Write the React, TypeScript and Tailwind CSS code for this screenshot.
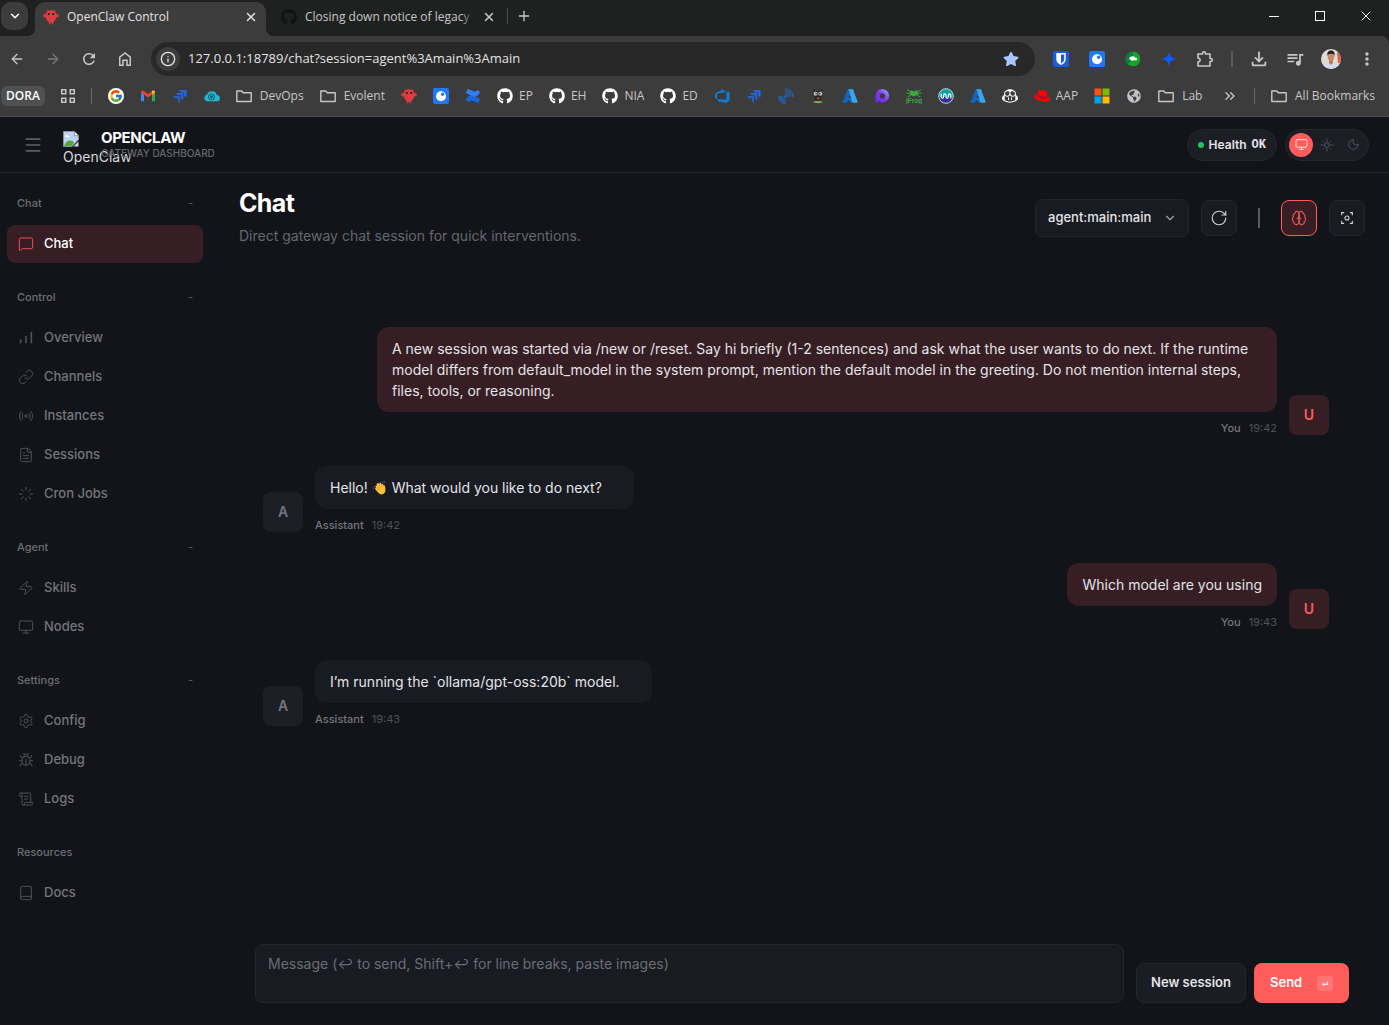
import { useId, useState, type ComponentType, type ReactNode } from "react";
import {
  ArrowLeft,
  ArrowRight,
  Book,
  Bug,
  ChevronDown,
  ChevronsRight,
  FileText,
  Info,
  Link,
  Loader,
  Menu,
  MessageSquare,
  Monitor,
  Moon,
  Plus,
  Radio,
  ScrollText,
  Settings,
  X,
  Zap,
} from "lucide-react";
import { FcGoogle } from "react-icons/fc";
import { FaGithub, FaGlobeAmericas, FaRedhat, FaStar } from "react-icons/fa";
import { GoCopilot } from "react-icons/go";
import { MdMoreVert, MdOutlineFileDownload, MdQueueMusic, MdRefresh } from "react-icons/md";

type IconProps = { className?: string };
type IconType = ComponentType<IconProps>;

// --- favicons and logos ---

function ClawLogo() {
  return (
    <svg viewBox="0 0 16 16" className="size-4" aria-hidden="true">
      <path d="M5 3 4 .8M11 3l1-2.2" stroke="#c62f33" strokeWidth="1" />
      <path
        d="M8 1.200c3.600 0 5.300 2 5.500 4.300 1.400-.4 2.300.2 2.300 1.200 0 1.200-1.200 1.900-2.500 1.700-.6 2.100-1.700 3.600-3.100 4.600v2.200H8.700v-1.400H7.300v1.400H5.800V13C4.400 12 3.300 10.500 2.700 8.400 1.400 8.600.2 7.900.2 6.700c0-1 .9-1.600 2.300-1.200C2.700 3.200 4.400 1.200 8 1.200Z"
        fill="#dc3c40"
      />
      <circle cx="5.800" cy="5" r="1.100" fill="#2b1014" />
      <circle cx="10.200" cy="5" r="1.100" fill="#2b1014" />
    </svg>
  );
}

function GoogleLogo() {
  return (
    <span className="flex size-4 items-center justify-center rounded-full bg-white">
      <FcGoogle className="size-[14px]" />
    </span>
  );
}

function GmailLogo() {
  return (
    <svg viewBox="0 0 16 16" className="size-4" aria-hidden="true">
      <path d="M1 4v8.500c0 .5.400.8.800.8H4V6.500Z" fill="#4285f4" />
      <path d="M15 4v8.500c0 .5-.4.8-.8.8H12V6.500Z" fill="#34a853" />
      <path d="M1 4.200C1 2.600 2.700 2 3.900 2.900L8 6l4.100-3.100C13.300 2 15 2.600 15 4.200L8 9.600Z" fill="#ea4335" />
      <path d="M12 3v3.700l3-2.300C15.200 2.700 13.500 2 12 3Z" fill="#fbbc04" />
    </svg>
  );
}

function JiraLogo() {
  return (
    <svg viewBox="0 0 16 16" className="size-4" fill="#2068e0" aria-hidden="true">
      <path d="M7 2h7.500v7.500L12 7.800V4.500H8.700Z" />
      <path d="M4 5h7.300v7.300L9 10.600V7.300H5.700Z" opacity=".9" />
      <path d="M1 8h7.100v7L5.900 13.400v-3.200H2.700Z" opacity=".8" />
    </svg>
  );
}

function CloudLogo() {
  return (
    <svg viewBox="0 0 16 16" className="size-4" aria-hidden="true">
      <path d="M3.500 13.300a3.300 3.300 0 0 1-.6-6.500 5.300 5.300 0 0 1 10.100.5 3 3 0 0 1-.3 6Z" fill="#24b6cf" />
      <circle cx="7.500" cy="8.800" r="3.400" fill="#17627a" />
      <circle cx="7.500" cy="8.800" r="2" fill="none" stroke="#35c2d8" strokeWidth=".8" />
    </svg>
  );
}

function OrbLogo() {
  return (
    <svg viewBox="0 0 16 16" className="size-4" aria-hidden="true">
      <rect width="16" height="16" rx="2" fill="#1e78f7" />
      <circle cx="8" cy="8.200" r="5" fill="#fff" />
      <circle cx="9.600" cy="6.300" r="1.700" fill="#1e78f7" />
    </svg>
  );
}

function ConfluenceLogo() {
  return (
    <svg viewBox="0 0 16 16" className="size-4" aria-hidden="true">
      <path d="m.6 12.300 1.600-2.600c2-3 4.500-2.800 7.600-1.300l5.400 2.500-2 4.400-5-2.300c-2.200-1-3-.9-4.200 1.100Z" fill="#1868db" />
      <path d="m15.400 3.700-1.600 2.600c-2 3-4.500 2.800-7.600 1.300L.8 5.100l2-4.400 5 2.300c2.200 1 3 .9 4.200-1.100Z" fill="#2f7ef5" />
    </svg>
  );
}

function GithubLogo() {
  return <FaGithub className="size-4 text-white" />;
}

function AzureDevopsLogo() {
  return (
    <svg viewBox="0 0 16 16" className="size-4" fill="#0f7cd6" aria-hidden="true">
      <path d="M15.500 3.600v8.700l-3.600 3-5.600-2v2L3.100 11l9.200.7V3.900Zm-3.100.3L7.200.8v2L2.500 4.200 1 6v4.200l2.100.9V5.600Z" />
    </svg>
  );
}

function WavesLogo() {
  return (
    <svg viewBox="0 0 16 16" className="size-4" fill="none" stroke="#1f66b8" strokeWidth="1.200" aria-hidden="true">
      <circle cx="7.500" cy="8.500" r="1" fill="#1f66b8" />
      <path d="M7 5.500a3 3 0 0 1 3.500 3.500M7 3.200A5.300 5.300 0 0 1 12.800 9M7 1a7.500 7.500 0 0 1 8 8" />
      <path d="M4.500 8a3 3 0 0 0 3.500 3.500M2.500 7.800A5.300 5.300 0 0 0 8 13.600M.7 7.500A7.500 7.500 0 0 0 8 15.500" />
    </svg>
  );
}

function AntLogo() {
  return (
    <svg viewBox="0 0 16 16" className="size-4" aria-hidden="true">
      <path d="M5 3.500 3.500 1M11 3.500 12.500 1" stroke="#222" strokeWidth="1" />
      <rect x="4.500" y="3" width="7" height="9.500" rx="3" fill="#26221f" />
      <circle cx="5.700" cy="5.700" r="2" fill="#c9c2ba" />
      <circle cx="10.300" cy="5.700" r="2" fill="#c9c2ba" />
      <circle cx="6.200" cy="5.800" r=".8" fill="#222" />
      <circle cx="9.800" cy="5.800" r=".8" fill="#222" />
      <path d="M7 9.300h2.500v2H7Z" fill="#b84a43" />
      <path d="M3 14c2-1.500 8-1.500 10 0-2 1.600-8 1.600-10 0Z" fill="#78a957" />
    </svg>
  );
}

function AzureLogo() {
  return (
    <svg viewBox="0 0 16 16" className="size-4" aria-hidden="true">
      <path d="M5.700 1.200h4.200L5.300 14.800H1.200c-.5 0-.8-.5-.7-.9Z" fill="#1266b5" />
      <path d="M5 10h7l1.500 4.800H9.700Z" fill="#0a78d4" />
      <path d="M6.400 1.200h4c.4 0 .7.200.8.600l4.500 12.100c.1.500-.2.900-.7.900h-4.300Z" fill="#38a7ea" />
    </svg>
  );
}

function LoopLogo() {
  const id = useId();
  return (
    <svg viewBox="0 0 16 16" className="size-4" aria-hidden="true">
      <defs>
        <linearGradient id={id} x1="0" y1="1" x2="1" y2="0">
          <stop offset="0" stopColor="#5b2ff0" />
          <stop offset=".5" stopColor="#8a35ee" />
          <stop offset="1" stopColor="#8fb6f5" />
        </linearGradient>
      </defs>
      <path
        d="M8.300 1a6.800 6.800 0 0 1 0 13.600H6.800c-.5 0-.8-.3-.8-.8v-1.600C4.500 14.400 1.500 15 1.500 13V7.800A6.800 6.800 0 0 1 8.300 1Zm0 4.300a2.600 2.600 0 1 0 0 5.200 2.600 2.600 0 0 0 0-5.200Z"
        fill={`url(#${id})`}
        fillRule="evenodd"
      />
    </svg>
  );
}

function JfrogLogo() {
  return (
    <svg viewBox="0 0 16 16" className="size-4" aria-hidden="true">
      <path
        d="M1 1.500 4.500 4M15 1.500 11.500 4M.5 5l4 .5M15.500 5l-4 .5M1.500 9 5 7M14.500 9 11 7"
        stroke="#3da744"
        strokeWidth="1"
      />
      <path d="M4 3.500 5.500 2.200 8 3.400l2.500-1.200L12 3.500v3L8 8.500l-4-2Z" fill="#3da744" />
      <text x="8" y="15" textAnchor="middle" fontSize="6.500" fontWeight="700" fill="#3da744" fontFamily="Liberation Sans">
        jFrog
      </text>
    </svg>
  );
}

function WaveDiscLogo() {
  return (
    <svg viewBox="0 0 16 16" className="size-4" aria-hidden="true">
      <circle cx="8" cy="8" r="7.500" fill="#0e9fa4" />
      <path d="M.6 9h14.800A7.500 7.500 0 0 1 .6 9Z" fill="#3b2d91" />
      <circle cx="8" cy="8" r="7.300" fill="none" stroke="#dfe9ea" strokeWidth=".8" />
      <path
        d="M3.200 5.500v3c0 2.300 2.400 2.300 2.400 0v-1c0-2.300 2.400-2.300 2.400 0v1c0 2.300 2.400 2.300 2.400 0v-1c0-2.300 2.400-2.300 2.400 0v3"
        fill="none"
        stroke="#fff"
        strokeWidth="1.200"
      />
    </svg>
  );
}

function CopilotLogo() {
  return <GoCopilot className="size-4 text-white" />;
}

function RedhatLogo() {
  return <FaRedhat className="size-4 text-[#f00]" />;
}

function MicrosoftLogo() {
  return (
    <svg viewBox="0 0 16 16" className="size-4" aria-hidden="true">
      <path d="M.5.500h7v7h-7Z" fill="#f65314" />
      <path d="M8.500.500h7v7h-7Z" fill="#7cbb00" />
      <path d="M.5 8.500h7v7h-7Z" fill="#00a1f1" />
      <path d="M8.500 8.500h7v7h-7Z" fill="#ffbb00" />
    </svg>
  );
}

function GlobeLogo() {
  return (
    <span className="flex size-4 items-center justify-center">
      <FaGlobeAmericas className="size-[14px] text-[#bfc3c8]" />
    </span>
  );
}

function FolderLogo() {
  return (
    <svg viewBox="0 0 16 16" className="mr-[2px] size-4" fill="none" stroke="#c7c7c7" strokeWidth="1.400" strokeLinejoin="round" aria-hidden="true">
      <path d="M.8 3h4.900l1.500 1.700h8v8.800H.8Z" />
    </svg>
  );
}

function AppsIcon() {
  return (
    <svg viewBox="0 0 14 14" className="size-[14px]" fill="none" stroke="#c7c7c7" strokeWidth="1.500" aria-hidden="true">
      <path d="M.75.75h4v4h-4ZM9.250.75h4v4h-4ZM.75 9.250h4v4h-4ZM9.250 9.250h4v4h-4Z" />
    </svg>
  );
}

function HomeIcon() {
  return (
    <svg viewBox="0 0 16 16" className="size-4" fill="none" stroke="currentColor" strokeWidth="1.500" aria-hidden="true">
      <path d="M2.750 14.250V6.200L8 2l5.250 4.200v8.050H10v-5H6v5Z" />
    </svg>
  );
}

function PuzzleIcon() {
  return (
    <svg viewBox="0 0 18 18" className="size-[18px]" fill="none" stroke="currentColor" strokeWidth="1.600" strokeLinejoin="round" aria-hidden="true">
      <path d="M2 4h4.500V3.200a1.500 1.500 0 0 1 3 0V4H14v4.500h.8a1.500 1.500 0 0 1 0 3H14V16H2v-4c2.800-.4 2.800-3.600 0-4Z" />
    </svg>
  );
}

function BitwardenLogo() {
  return (
    <svg viewBox="0 0 16 16" className="size-4" aria-hidden="true">
      <rect width="16" height="16" rx="2" fill="#175ddc" />
      <path d="M3.300 2h9.400v6.200c0 2.700-2 4.600-4.700 5.900-2.700-1.300-4.700-3.200-4.700-5.900Z" fill="#fff" />
      <path d="M8 3.600h3.200v4.600c0 1.900-1.200 3.100-3.200 4.200Z" fill="#175ddc" />
    </svg>
  );
}

function LeafLogo() {
  return (
    <svg viewBox="0 0 16 16" className="size-4" aria-hidden="true">
      <circle cx="8" cy="8" r="7.300" fill="#13a526" />
      <path d="M8 .7a7.300 7.300 0 0 0-5 12.600L8 8Z" fill="#0c7f3c" />
      <path d="M4 8c.6-2.800 4.500-3.600 6-1.400 1.900-.1 2.600 1.200 2 2.600H8l-1 1C6.500 9 5.500 9 4 8Z" fill="#fff" />
    </svg>
  );
}

function SparkLogo() {
  return (
    <svg viewBox="0 0 16 16" className="size-4" aria-hidden="true">
      <path d="M8 .3c.6 4.800 2.500 6.900 7.700 7.700-5.200.8-7.100 2.900-7.700 7.700C7.400 10.900 5.500 8.800.3 8 5.500 7.200 7.400 5.100 8 .3Z" fill="#0b5cff" />
    </svg>
  );
}

function ProfilePhoto() {
  const id = useId();
  return (
    <svg viewBox="0 0 20 20" className="size-5" aria-hidden="true">
      <clipPath id={id}>
        <circle cx="10" cy="10" r="10" />
      </clipPath>
      <g clipPath={`url(#${id})`}>
        <path d="M0 0h20v20H0Z" fill="#dfdcd8" />
        <path d="M16 2h4v12h-3Z" fill="#e0603c" />
        <path d="M1 20c.5-5 4-7 9-7s8.500 2 9 7Z" fill="#d3dbe8" />
        <path d="M8 10h4v4l-2 2-2-2Z" fill="#b67a5d" />
        <ellipse cx="10" cy="7.500" rx="3.300" ry="4.300" fill="#c68a6b" />
        <path d="M6.300 7C6 3 7.500 1.500 10 1.500S14 3 13.700 7c-.5-1.500-1-2.300-3.700-2.300S6.800 5.500 6.300 7Z" fill="#2a2120" />
      </g>
    </svg>
  );
}

function BarsIcon({ className }: IconProps) {
  return (
    <svg viewBox="0 0 24 24" className={className} fill="none" stroke="currentColor" aria-hidden="true">
      <path d="M20 20V3M12 20V9M4 20v-6" strokeWidth="2.500" />
    </svg>
  );
}

function BrainIcon() {
  return (
    <svg
      viewBox="0 0 24 24"
      className="size-4"
      fill="none"
      stroke="currentColor"
      strokeWidth="1.700"
      strokeLinecap="round"
      strokeLinejoin="round"
      aria-hidden="true"
    >
      <path d="M12 5a3 3 0 1 0-5.997.125 4 4 0 0 0-2.526 5.770 4 4 0 0 0 .556 6.588A4 4 0 1 0 12 18Z" />
      <path d="M12 5a3 3 0 1 1 5.997.125 4 4 0 0 1 2.526 5.770 4 4 0 0 1-.556 6.588A4 4 0 1 1 12 18Z" />
      <path d="M15 13a4.500 4.500 0 0 1-3-4 4.500 4.500 0 0 1-3 4" />
    </svg>
  );
}

function FocusIcon() {
  return (
    <svg
      viewBox="0 0 24 24"
      className="size-4"
      fill="none"
      stroke="currentColor"
      strokeWidth="1.700"
      strokeLinecap="round"
      aria-hidden="true"
    >
      <path d="M4 7V4h3M17 4h3v3M20 17v3h-3M7 20H4v-3" />
      <circle cx="12" cy="12" r="3" />
    </svg>
  );
}

function RefreshIcon() {
  return (
    <svg
      viewBox="0 0 24 24"
      className="size-[18px]"
      fill="none"
      stroke="currentColor"
      strokeWidth="1.500"
      strokeLinecap="round"
      strokeLinejoin="round"
      aria-hidden="true"
    >
      <path d="M21 12a9 9 0 1 1-9-9c2.520 0 4.930 1 6.740 2.740L21 8" />
      <path d="M21 3v5h-5" />
    </svg>
  );
}

function SunIcon() {
  return (
    <svg viewBox="0 0 24 24" className="size-[14px]" fill="none" stroke="currentColor" strokeWidth="1.500" aria-hidden="true">
      <circle cx="12" cy="12" r="4" />
      <path d="M12 1v5M12 18v5M1 12h5M18 12h5M4.900 4.900l1.400 1.400M17.700 17.700l1.400 1.400M4.900 19.100l1.400-1.400M17.700 6.300l1.400-1.400" />
    </svg>
  );
}

function WavingHand() {
  return (
    <svg viewBox="0 0 16 16" className="mx-px inline size-[14px] align-[-2px]" role="img" aria-label="waving hand">
      <path
        d="M5 2.500c.8-.6 1.400-.2 1.800.4l.6.8V2.600c.2-1 1.500-1 1.800 0l.5 1.300c.3-1 1.700-1 1.900.1l.3 1.300c.5-.8 1.700-.5 1.800.5.4 3 1.300 5.600-.6 8-1.800 2-5 2-6.800 0L2.500 9.500c-.5-.8.3-1.700 1.200-1.300L2.800 6.800c-.4-.9.500-1.700 1.300-1.200L4 4.500C4 3.500 4.400 2.900 5 2.500Z"
        fill="#fcbf3a"
      />
      <path d="m5 5.500 3 3.500M4 8l3 2.800M7.500 4l2 3.600" stroke="#e28a1d" strokeWidth=".7" />
      <path d="M1 6.500c-.5 1-.3 2 0 2.800M10 1c1 .1 1.700.5 2.300 1.300M12 .2c1 .3 1.700 1 2 2" fill="none" stroke="#2d6ea3" strokeWidth="1" />
    </svg>
  );
}

function BrokenImage() {
  return (
    <svg viewBox="0 0 16 16" className="size-4 shrink-0" aria-hidden="true">
      <path d="M.5.500h10.800l4.200 4.200v4L9 15.500H.5Z" fill="#bcd3f5" stroke="#8b8f96" />
      <path d="M11.300.5v4.200h4.200" fill="#fff" stroke="#8b8f96" />
      <path d="M2.500 5.500c.2-1.500 2-1.800 2.700-.8 1-.3 1.800.4 1.700 1.300H2.500Z" fill="#fff" />
      <path d="M1 15c1-3.500 3.500-5.500 6-5.500 1.800 0 3.200.8 4 2L9 15Z" fill="#54a83a" />
      <path d="M10.500 15.500l5-5v5Z" fill="#d6dade" />
    </svg>
  );
}

// --- browser window ---

const BOOKMARKS: { icon: ComponentType; label?: string; name?: string }[] = [
  { icon: GoogleLogo, name: "Google" },
  { icon: GmailLogo, name: "Gmail" },
  { icon: JiraLogo, name: "Jira" },
  { icon: CloudLogo, name: "Cloud" },
  { icon: FolderLogo, label: "DevOps" },
  { icon: FolderLogo, label: "Evolent" },
  { icon: ClawLogo, name: "OpenClaw" },
  { icon: OrbLogo, name: "Orb" },
  { icon: ConfluenceLogo, name: "Confluence" },
  { icon: GithubLogo, label: "EP" },
  { icon: GithubLogo, label: "EH" },
  { icon: GithubLogo, label: "NIA" },
  { icon: GithubLogo, label: "ED" },
  { icon: AzureDevopsLogo, name: "Azure DevOps" },
  { icon: JiraLogo, name: "Jira board" },
  { icon: WavesLogo, name: "Signals" },
  { icon: AntLogo, name: "Ant" },
  { icon: AzureLogo, name: "Azure" },
  { icon: LoopLogo, name: "Loop" },
  { icon: JfrogLogo, name: "JFrog" },
  { icon: WaveDiscLogo, name: "Wave" },
  { icon: AzureLogo, name: "Azure portal" },
  { icon: CopilotLogo, name: "Copilot" },
  { icon: RedhatLogo, label: "AAP" },
  { icon: MicrosoftLogo, name: "Microsoft" },
  { icon: GlobeLogo, name: "Site" },
  { icon: FolderLogo, label: "Lab" },
];

function ChromeButton({ label, children }: { label: string; children: ReactNode }) {
  return (
    <button type="button" aria-label={label} className="flex size-8 shrink-0 items-center justify-center text-[#c7c7c7]">
      {children}
    </button>
  );
}

function TabStrip() {
  return (
    <div className="flex h-9 items-start pl-px">
      <button
        type="button"
        aria-label="Search tabs"
        className="mt-[2px] flex h-7 w-[27px] items-center justify-center rounded-[10px] bg-[#3c3c3c] text-white"
      >
        <ChevronDown className="size-[14px]" strokeWidth={2.5} />
      </button>
      <div className="relative ml-[7px] mt-[2px] flex h-[34px] w-[231px] items-center rounded-t-[10px] bg-[#3c3c3c] px-2 pb-1">
        {/* the tab flares out where it meets the toolbar */}
        <span className="absolute -left-2 bottom-0 size-2 bg-[radial-gradient(circle_at_0_0,transparent_8px,#3c3c3c_8px)]" />
        <span className="absolute -right-2 bottom-0 size-2 bg-[radial-gradient(circle_at_100%_0,transparent_8px,#3c3c3c_8px)]" />
        <ClawLogo />
        <span className="ml-2 flex-1 truncate text-xs text-[#e3e3e3]">OpenClaw Control</span>
        <button type="button" aria-label="Close tab" className="text-[#e3e3e3]">
          <X className="size-[14px]" strokeWidth={2.5} />
        </button>
      </div>
      <div className="mt-[2px] flex h-[34px] w-[230px] items-center pb-1 pl-[15px]">
        <FaGithub className="size-4 text-[#111212]" />
        <span className="relative ml-2 w-[168px] overflow-hidden whitespace-nowrap text-xs text-[#c7c7c7]">
          Closing down notice of legacy C
          <span className="absolute inset-y-0 right-0 w-3 bg-gradient-to-r from-transparent to-[#1f2120]" />
        </span>
        <button type="button" aria-label="Close tab" className="ml-[9px] text-[#c7c7c7]">
          <X className="size-[14px]" strokeWidth={2.5} />
        </button>
      </div>
      <div className="ml-[11px] mt-2 h-4 w-px bg-[#4a4c4b]" />
      <button type="button" aria-label="New tab" className="ml-2 mt-2 text-[#c7c7c7]">
        <Plus className="size-4" />
      </button>
      <div className="ml-auto flex h-8 text-white">
        <button type="button" aria-label="Minimize" className="flex w-[46px] items-center justify-center">
          <span className="h-px w-[10px] bg-white" />
        </button>
        <button type="button" aria-label="Maximize" className="flex w-[46px] items-center justify-center">
          <span className="size-[10px] border border-white" />
        </button>
        <button type="button" aria-label="Close window" className="flex w-[46px] items-center justify-center">
          <X className="size-4" strokeWidth={1.5} />
        </button>
      </div>
    </div>
  );
}

function Toolbar() {
  return (
    <div className="flex h-[46px] items-center gap-1 px-px">
      <ChromeButton label="Back">
        <ArrowLeft className="size-4" />
      </ChromeButton>
      <ChromeButton label="Forward">
        <ArrowRight className="size-4 text-[#7a7a7a]" />
      </ChromeButton>
      <ChromeButton label="Reload">
        <MdRefresh className="size-[18px]" />
      </ChromeButton>
      <ChromeButton label="Home">
        <HomeIcon />
      </ChromeButton>
      <div className="mx-[6px] flex h-[34px] flex-1 items-center rounded-full bg-[#282828] px-[5px]">
        <span className="flex size-6 shrink-0 items-center justify-center rounded-full bg-[#3c3c3c]">
          <Info className="size-4 text-[#e3e3e3]" />
        </span>
        <input
          aria-label="Address"
          className="min-w-0 flex-1 bg-transparent px-2 text-[13px] text-[#e3e3e3] outline-none"
          defaultValue="127.0.0.1:18789/chat?session=agent%3Amain%3Amain"
        />
        <FaStar className="mr-[11px] size-4 text-[#a8c7fa]" />
      </div>
      <ChromeButton label="Bitwarden">
        <BitwardenLogo />
      </ChromeButton>
      <ChromeButton label="Orb">
        <OrbLogo />
      </ChromeButton>
      <ChromeButton label="Leaf">
        <LeafLogo />
      </ChromeButton>
      <ChromeButton label="Spark">
        <SparkLogo />
      </ChromeButton>
      <ChromeButton label="Extensions">
        <PuzzleIcon />
      </ChromeButton>
      <span className="mx-[6px] h-4 w-[2px] bg-[#5a5a5a]" />
      <ChromeButton label="Downloads">
        <MdOutlineFileDownload className="size-[22px]" />
      </ChromeButton>
      <ChromeButton label="Media">
        <MdQueueMusic className="size-5" />
      </ChromeButton>
      <ChromeButton label="Profile">
        <ProfilePhoto />
      </ChromeButton>
      <ChromeButton label="More">
        <MdMoreVert className="size-5" />
      </ChromeButton>
      <span className="w-px" />
    </div>
  );
}

function BookmarksBar() {
  return (
    <div className="mt-1 flex h-[31px] items-start gap-4 overflow-hidden whitespace-nowrap border-b border-[#4b4b4b] pl-px pr-[14px] text-xs text-[#c7c7c7]">
      <button type="button" className="h-5 rounded-md bg-[#4e5052] px-[5px] font-semibold text-white">
        DORA
      </button>
      <button type="button" aria-label="Apps" className="flex h-5 items-center">
        <AppsIcon />
      </button>
      <span className="mt-[2px] h-4 w-px bg-[#6a6a6a]" />
      {BOOKMARKS.map(({ icon: Icon, label, name }) => (
        <a key={label ?? name} href="#" aria-label={label ?? name} className="flex h-5 items-center gap-[6px]">
          <Icon />
          {label}
        </a>
      ))}
      <button type="button" aria-label="More bookmarks" className="ml-auto flex h-5 items-center">
        <ChevronsRight className="size-4" />
      </button>
      <span className="mt-[2px] h-4 w-px bg-[#6a6a6a]" />
      <a href="#" className="flex h-5 items-center gap-[6px]">
        <FolderLogo />
        All Bookmarks
      </a>
    </div>
  );
}

// --- dashboard ---

type NavItem = { label: string; icon: IconType; active?: boolean };

const NAV: { label: string; fixed?: boolean; items: NavItem[] }[] = [
  { label: "Chat", items: [{ label: "Chat", icon: MessageSquare, active: true }] },
  {
    label: "Control",
    items: [
      { label: "Overview", icon: BarsIcon },
      { label: "Channels", icon: Link },
      { label: "Instances", icon: Radio },
      { label: "Sessions", icon: FileText },
      { label: "Cron Jobs", icon: Loader },
    ],
  },
  {
    label: "Agent",
    items: [
      { label: "Skills", icon: Zap },
      { label: "Nodes", icon: Monitor },
    ],
  },
  {
    label: "Settings",
    items: [
      { label: "Config", icon: Settings },
      { label: "Debug", icon: Bug },
      { label: "Logs", icon: ScrollText },
    ],
  },
  { label: "Resources", fixed: true, items: [{ label: "Docs", icon: Book }] },
];

type Message = { role: "user" | "assistant"; time: string; body: ReactNode };

const MESSAGES: Message[] = [
  {
    role: "user",
    time: "19:42",
    body: "A new session was started via /new or /reset. Say hi briefly (1-2 sentences) and ask what the user wants to do next. If the runtime model differs from default_model in the system prompt, mention the default model in the greeting. Do not mention internal steps, files, tools, or reasoning.",
  },
  {
    role: "assistant",
    time: "19:42",
    body: (
      <>
        Hello! <WavingHand /> What would you like to do next?
      </>
    ),
  },
  { role: "user", time: "19:43", body: "Which model are you using" },
  { role: "assistant", time: "19:43", body: "I’m running the `ollama/gpt-oss:20b` model." },
];

function TopBar() {
  return (
    <header className="flex h-14 items-center border-b border-[#26272b] pl-[23px] pr-5">
      <button type="button" aria-label="Toggle menu" className="text-[#5d5f67]">
        <Menu className="size-5" />
      </button>
      {/* the logo failed to load, so its alt text spills out of the 28px box */}
      <div className="ml-5 flex items-center gap-[10px]">
        <div className="flex h-7 w-7 flex-col whitespace-nowrap text-sm leading-5 text-[#d8d9dc]">
          <BrokenImage />
          <span>OpenClaw</span>
        </div>
        <div>
          <div className="text-[15px] font-bold leading-4 tracking-tight text-white">OPENCLAW</div>
          <div className="text-[10px] font-medium leading-[14px] text-[#66676f]">GATEWAY DASHBOARD</div>
        </div>
      </div>
      <div className="ml-auto flex h-8 items-center rounded-full border border-[#26272d] bg-[#1b1e25] px-[10px] text-xs text-[#e4e4e7]">
        <span className="size-[6px] rounded-full bg-[#22c55e]" />
        <span className="ml-[5px] font-semibold">Health</span>
        <span className="ml-[5px] font-['Liberation_Mono',monospace] font-bold">OK</span>
      </div>
      <div className="ml-2 flex h-8 items-center gap-[2px] rounded-full border border-[#26272d] bg-[#1b1e25] px-[3px] text-[#5d5f67]">
        <button
          type="button"
          aria-label="System theme"
          className="flex size-6 items-center justify-center rounded-full bg-[#ff5c5c] text-white"
        >
          <Monitor className="size-[13px]" strokeWidth={1.5} />
        </button>
        <button type="button" aria-label="Light theme" className="flex size-6 items-center justify-center">
          <SunIcon />
        </button>
        <button type="button" aria-label="Dark theme" className="flex size-6 items-center justify-center">
          <Moon className="size-[13px]" strokeWidth={1.5} />
        </button>
      </div>
    </header>
  );
}

function Sidebar() {
  return (
    <nav className="flex w-[215px] shrink-0 flex-col gap-6 pl-[7px] pr-3 pt-5">
      {NAV.map((group) => (
        <div key={group.label}>
          <button
            type="button"
            className="flex h-5 w-full items-center justify-between px-[10px] text-[11px] font-medium text-[#6c6d75]"
          >
            {group.label}
            {group.fixed ? null : <span className="text-[#55565e]">-</span>}
          </button>
          <ul className="mt-3 flex flex-col gap-px">
            {group.items.map(({ label, icon: Icon, active }) => (
              <li key={label}>
                <a
                  href="#"
                  className={`flex h-[38px] items-center gap-[10px] rounded-lg px-[11px] text-[13px] font-medium ${
                    active ? "bg-[#361e24] text-white" : "text-[#74757d]"
                  }`}
                >
                  <Icon className={`size-4 stroke-[1.5] ${active ? "text-[#e95456]" : "text-[#4f5058]"}`} />
                  {label}
                </a>
              </li>
            ))}
          </ul>
        </div>
      ))}
    </nav>
  );
}

const SQUARE = "flex size-9 items-center justify-center rounded-lg border";

function PageHeader() {
  return (
    <div className="flex items-center justify-between pt-[14px]">
      <div>
        <h1 className="text-[25px] font-bold leading-8 tracking-tight text-white">Chat</h1>
        <p className="mt-[5px] text-sm leading-6 text-[#66676f]">Direct gateway chat session for quick interventions.</p>
      </div>
      <div className="flex items-center gap-3">
        <div className="relative">
          <select
            aria-label="Session"
            className="h-[38px] w-[154px] appearance-none rounded-lg border border-[#24262d] bg-[#181b22] pl-3 text-[13px] font-medium text-[#e4e4e7]"
          >
            <option>agent:main:main</option>
          </select>
          <ChevronDown className="pointer-events-none absolute right-3 top-3 size-[14px] text-[#a1a1aa]" />
        </div>
        <button type="button" aria-label="Refresh" className={`${SQUARE} border-[#24262d] bg-[#181b22] text-[#d4d4d8]`}>
          <RefreshIcon />
        </button>
        <span className="mx-[9px] h-5 w-[2px] bg-[#5a5d63]" />
        <button type="button" aria-label="Show thinking" className={`${SQUARE} border-[#ff5c5c] bg-[#361e24] text-[#e95456]`}>
          <BrainIcon />
        </button>
        <button type="button" aria-label="Focus mode" className={`${SQUARE} border-[#24262d] bg-[#181b22] text-[#d4d4d8]`}>
          <FocusIcon />
        </button>
      </div>
    </div>
  );
}

function ChatGroup({ message }: { message: Message }) {
  const user = message.role === "user";
  return (
    <li className={`flex items-end gap-3 ${user ? "flex-row-reverse" : ""}`}>
      <div
        className={`flex size-10 shrink-0 items-center justify-center rounded-lg text-sm font-semibold ${
          user ? "bg-[#361e24] text-[#ff5c5c]" : "bg-[#1c1f26] text-[#74757d]"
        }`}
      >
        {user ? "U" : "A"}
      </div>
      <div className={`flex max-w-[900px] flex-col ${user ? "items-end" : "items-start"}`}>
        <div
          className={`rounded-xl py-[11px] pl-[15px] text-sm leading-[21px] text-[#e4e4e7] ${
            user ? "bg-[#361e24] pr-[15px]" : "bg-[#181b22] pr-8"
          }`}
        >
          {message.body}
        </div>
        <div className="mt-[9px] flex gap-2 text-[11px] leading-[14px] text-[#74757d]">
          <span className="font-medium">{user ? "You" : "Assistant"}</span>
          <span className="text-[#505159]">{message.time}</span>
        </div>
      </div>
    </li>
  );
}

function Composer() {
  const [draft, setDraft] = useState("");
  return (
    <form className="flex items-end gap-3 px-4 pb-[22px]" onSubmit={(e) => e.preventDefault()}>
      <textarea
        aria-label="Message"
        value={draft}
        onChange={(e) => setDraft(e.target.value)}
        placeholder="Message (↩ to send, Shift+↩ for line breaks, paste images)"
        className="h-[59px] min-w-0 flex-1 resize-none rounded-lg border border-[#24262d] bg-[#181b22] px-3 py-2 text-sm leading-[21px] text-[#e4e4e7] outline-none placeholder:text-[#6c6d75]"
      />
      <div className="flex gap-2 text-[13px] font-semibold">
        <button type="button" className="h-10 w-[110px] rounded-lg border border-[#26272d] bg-[#1a1d24] text-[#e4e4e7]">
          New session
        </button>
        <button type="submit" className="flex h-10 w-[95px] items-center justify-between rounded-lg bg-[#ff5c5c] px-4 text-white">
          Send
          <kbd className="flex h-[15px] w-4 items-center justify-center rounded-[3px] bg-white/15 text-[10px] text-white/80">
            ↵
          </kbd>
        </button>
      </div>
    </form>
  );
}

export default function App() {
  return (
    <div className="flex min-h-screen flex-col bg-[#121419] font-['Inter',sans-serif]">
      <div className="bg-[#1f2120] font-['Open_Sans','Noto_Sans',sans-serif]">
        <TabStrip />
        <div className="rounded-tr-lg bg-[#3c3c3c]">
          <Toolbar />
          <BookmarksBar />
        </div>
      </div>
      <TopBar />
      <div className="flex flex-1">
        <Sidebar />
        <main className="flex min-w-0 flex-1 flex-col px-6">
          <PageHeader />
          <ul className="mt-[79px] flex flex-1 flex-col gap-[31px] pl-6 pr-9">
            {MESSAGES.map((message, i) => (
              <ChatGroup key={i} message={message} />
            ))}
          </ul>
          <Composer />
        </main>
      </div>
    </div>
  );
}
